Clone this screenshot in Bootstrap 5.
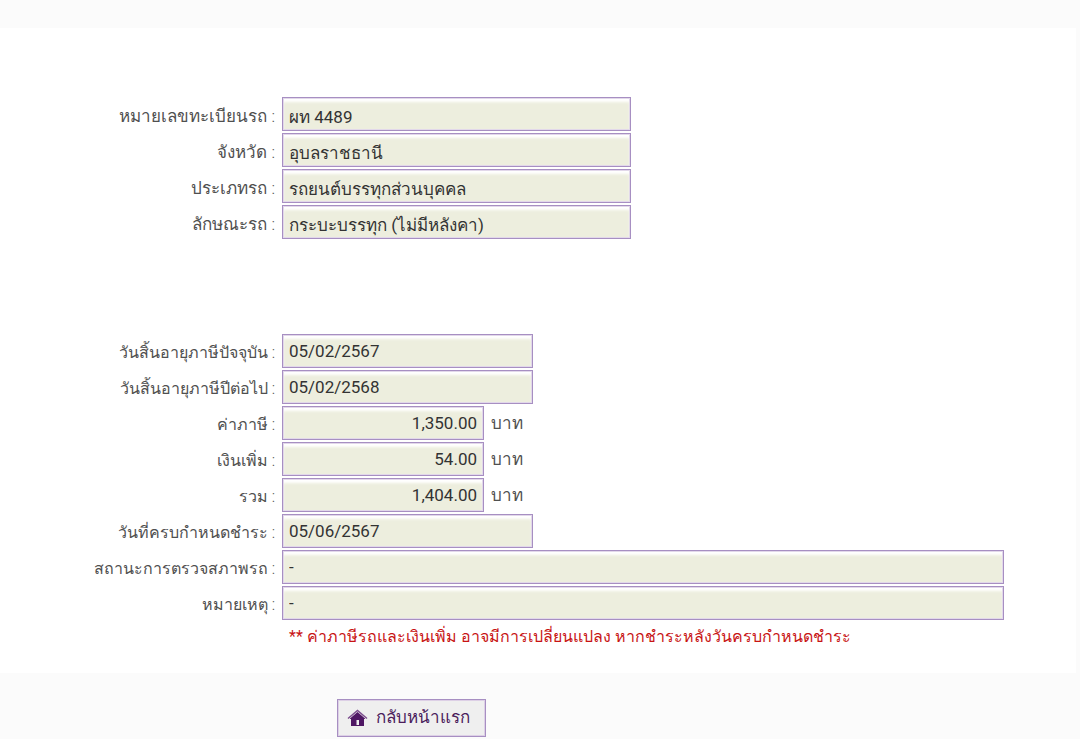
<!DOCTYPE html>
<html lang="th">
<head>
<meta charset="utf-8">
<meta name="viewport" content="width=device-width, initial-scale=1">
<title>ข้อมูลภาษีรถ</title>
<link href="https://cdn.jsdelivr.net/npm/bootstrap@5.3.0/dist/css/bootstrap.min.css" rel="stylesheet">
<style>
body{background:#fbfbfb;color:#505050;font-family:Roboto,sans-serif;font-size:17px;line-height:24px}
.tax-panel{background:#fff;margin-top:28px;margin-right:4px;padding:69px 0 24px}
.field-row{min-height:34px;margin-bottom:2px;gap:7px}
.field-label{width:275px;flex:none;text-align:right;font-weight:300;padding-top:4px}
.form-control.field-box{height:34px;padding:0 6px;border:1px solid #a78fc2;border-radius:0;background:#edeede;color:#333;font-size:17px;line-height:24px;box-shadow:inset 0 0 0 1px #e2d8ea,inset 0 4px 3px #fff}
.form-control.w-car{max-width:349px;padding-top:4px}
.w-date{max-width:251px}
.w-money{max-width:202px}
.w-long{max-width:722px}
.tax-block{margin-top:95px}
.tax-block .field-label,.tax-note{font-size:16px}
.tax-note{color:#c81414;margin-left:289px;line-height:24px;padding-top:3px}
.unit{font-weight:300}
.home-btn{margin:26px 0 0 337px;width:149px;height:38px;padding:0 9px;gap:8px;border:1px solid #a78fc2;border-radius:0;background:#efefef;color:#4b1d5c;font-size:17px;box-shadow:inset 0 0 0 1px #ddd0e6}
</style>
</head>
<body>
<main class="tax-panel">
<form>
<section>
<div class="field-row d-flex align-items-center"><label class="field-label" for="plate">หมายเลขทะเบียนรถ :</label><input class="form-control field-box w-car" id="plate" value="ผท 4489" readonly></div>
<div class="field-row d-flex align-items-center"><label class="field-label" for="province">จังหวัด :</label><input class="form-control field-box w-car" id="province" value="อุบลราชธานี" readonly></div>
<div class="field-row d-flex align-items-center"><label class="field-label" for="type">ประเภทรถ :</label><input class="form-control field-box w-car" id="type" value="รถยนต์บรรทุกส่วนบุคคล" readonly></div>
<div class="field-row d-flex align-items-center"><label class="field-label" for="body">ลักษณะรถ :</label><input class="form-control field-box w-car" id="body" value="กระบะบรรทุก (ไม่มีหลังคา)" readonly></div>
</section>
<section class="tax-block">
<div class="field-row d-flex align-items-center"><label class="field-label" for="exp">วันสิ้นอายุภาษีปัจจุบัน :</label><input class="form-control field-box w-date" id="exp" value="05/02/2567" readonly></div>
<div class="field-row d-flex align-items-center"><label class="field-label" for="next">วันสิ้นอายุภาษีปีต่อไป :</label><input class="form-control field-box w-date" id="next" value="05/02/2568" readonly></div>
<div class="field-row d-flex align-items-center"><label class="field-label" for="tax">ค่าภาษี :</label><input class="form-control field-box w-money text-end" id="tax" value="1,350.00" readonly><span class="unit">บาท</span></div>
<div class="field-row d-flex align-items-center"><label class="field-label" for="extra">เงินเพิ่ม :</label><input class="form-control field-box w-money text-end" id="extra" value="54.00" readonly><span class="unit">บาท</span></div>
<div class="field-row d-flex align-items-center"><label class="field-label" for="total">รวม :</label><input class="form-control field-box w-money text-end" id="total" value="1,404.00" readonly><span class="unit">บาท</span></div>
<div class="field-row d-flex align-items-center"><label class="field-label" for="due">วันที่ครบกำหนดชำระ :</label><input class="form-control field-box w-date" id="due" value="05/06/2567" readonly></div>
<div class="field-row d-flex align-items-center"><label class="field-label" for="status">สถานะการตรวจสภาพรถ :</label><input class="form-control field-box w-long" id="status" value="-" readonly></div>
<div class="field-row d-flex align-items-center"><label class="field-label" for="remark">หมายเหตุ :</label><input class="form-control field-box w-long" id="remark" value="-" readonly></div>
<p class="tax-note mb-0">** ค่าภาษีรถและเงินเพิ่ม อาจมีการเปลี่ยนแปลง หากชำระหลังวันครบกำหนดชำระ</p>
</section>
</form>
</main>
<button type="button" class="btn home-btn d-flex align-items-center text-nowrap"><svg width="21" height="18" viewBox="0 0 21 18" aria-hidden="true"><path d="M1 9.500 10.500 1.500 20 9.500" fill="none" stroke="#7b4c8d" stroke-width="1.500"/><path d="M10.500 3 18 9.500V10h-1v7H4v-7H3v-.5z" fill="#4f1764"/><path d="M9.500 11h2.500v5H9.500z" fill="#efefef"/></svg><span>กลับหน้าแรก</span></button>
<script src="https://cdn.jsdelivr.net/npm/bootstrap@5.3.0/dist/js/bootstrap.bundle.min.js"></script>
</body>
</html>
